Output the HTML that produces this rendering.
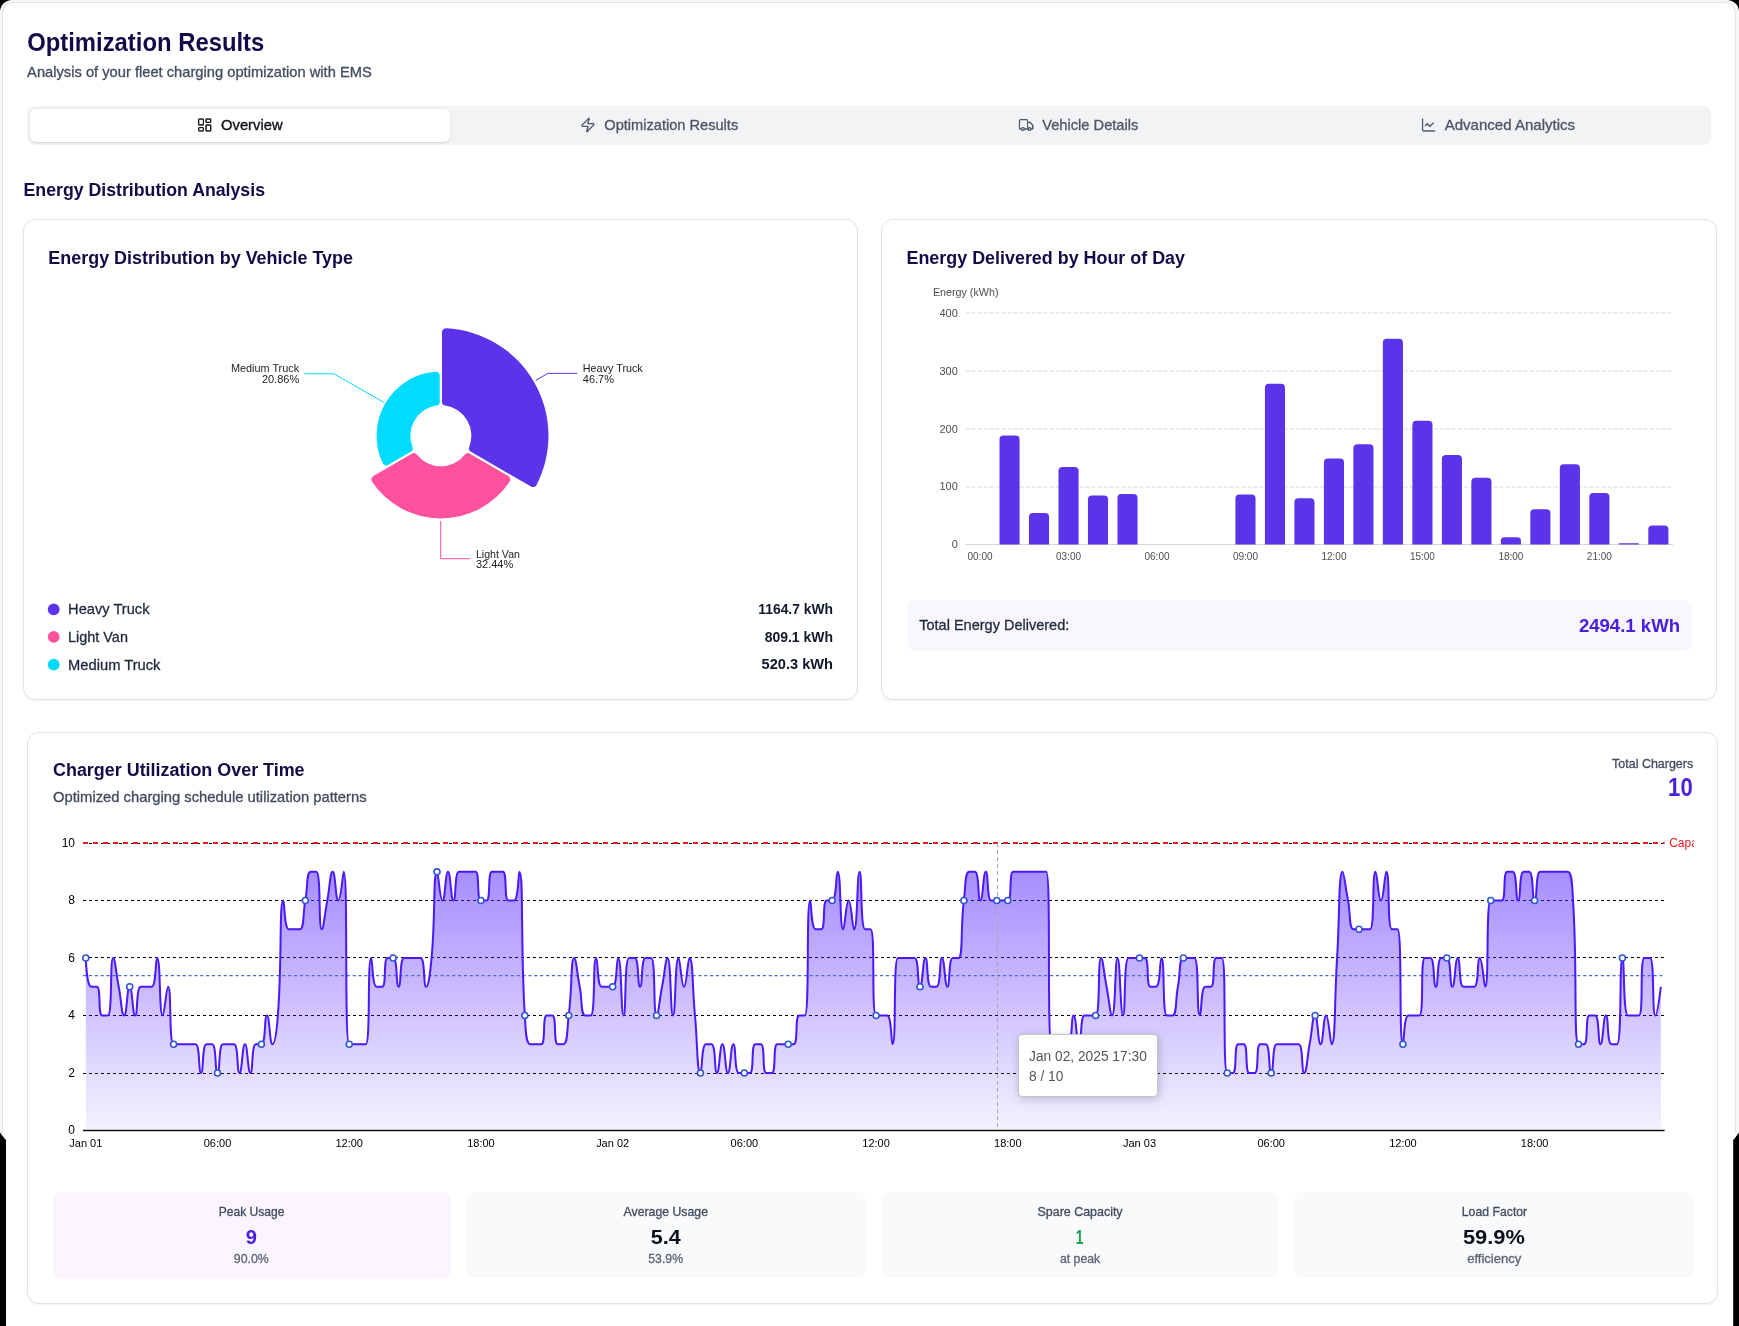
<!DOCTYPE html>
<html><head><meta charset="utf-8"><title>Optimization Results</title>
<style>
*{margin:0;padding:0;box-sizing:border-box}
html,body{width:1739px;height:1326px;overflow:hidden;background:#000;font-family:"Liberation Sans",sans-serif}
.abs{position:absolute}
#ring{left:0;top:0;width:1739px;height:1133px;background:#f6f7f9;border-radius:12px 12px 0 0;overflow:hidden}
#inner{left:2px;top:2px;width:1734px;height:1200px;background:#fff;border:1px solid #e1e3e7;border-radius:11px 11px 0 0}
#bottom{left:0;top:1133px;width:1739px;height:193px;background:#fff}
.card{background:#fff;border:1px solid #e2e2e3;border-radius:12px;box-shadow:0 1px 2px rgba(0,0,0,0.06)}
#tabs{left:26.5px;top:105.6px;width:1684.7px;height:39px;background:#f2f3f5;border-radius:8px}
#tab1{left:29.5px;top:108.6px;width:420.5px;height:33px;background:#fff;border-radius:6px;box-shadow:0 1px 3px rgba(0,0,0,0.10),0 1px 2px -1px rgba(0,0,0,0.10)}
#tot{left:906.7px;top:599.7px;width:785.3px;height:51.2px;background:#f9f6fe;border-radius:8px}
.stat{top:1192px;width:398.1px;height:86px;border-radius:8px;background:#f9fafb}
#tip{left:1018.3px;top:1034.2px;width:139.6px;height:63px;background:#fff;border:1px solid #c4c4c4;border-radius:4px;box-shadow:1px 2px 10px rgba(0,0,0,0.2)}
svg{position:absolute;left:0;top:0;overflow:visible;will-change:transform}
text{font-family:"Liberation Sans",sans-serif}
</style></head><body>
<div id="ring" class="abs"><div id="inner" class="abs"></div></div>
<div id="bottom" class="abs"></div>
<svg width="1739" height="1326" viewBox="0 0 1739 1326"><polygon points="0,1132.6 2.2,1135.4 6,1140.3 6,1326 0,1326" fill="#000"/><polygon points="1739,1132.6 1736.8,1135.4 1733.2,1140.3 1733.2,1326 1739,1326" fill="#000"/></svg>
<div id="tabs" class="abs"></div>
<div id="tab1" class="abs"></div>
<div class="abs card" style="left:22.85px;top:219.1px;width:835.5px;height:480.8px"></div>
<div class="abs card" style="left:881.4px;top:219.1px;width:835.5px;height:480.8px"></div>
<div class="abs card" style="left:27.4px;top:731.7px;width:1690.7px;height:572px"></div>
<div id="tot" class="abs"></div>
<div class="abs stat" style="left:53px;background:#faf5ff"></div>
<div class="abs stat" style="left:467.1px"></div>
<div class="abs stat" style="left:881.2px"></div>
<div class="abs stat" style="left:1295.3px"></div>
<svg width="1739" height="1326" viewBox="0 0 1739 1326">
<path d="M441.950 332.276 A4.000 4.000 0 0 1 446.147 328.280 A107.600 107.600 0 0 1 536.570 484.898 A4.000 4.000 0 0 1 531.011 486.535 L470.950 451.858 A4.000 4.000 0 0 1 469.228 446.928 A30.500 30.500 0 0 0 445.359 405.585 A4.000 4.000 0 0 1 441.950 401.629 Z" fill="#5b34ea"/>
<path d="M508.270 475.945 A4.000 4.000 0 0 1 509.597 481.629 A82.650 82.650 0 0 1 372.103 481.629 A4.000 4.000 0 0 1 373.430 475.945 L411.850 453.763 A4.000 4.000 0 0 1 416.981 454.737 A30.500 30.500 0 0 0 464.719 454.737 A4.000 4.000 0 0 1 469.850 453.763 Z" fill="#ff519d"/>
<path d="M388.266 464.839 A4.000 4.000 0 0 1 382.645 463.075 A64.300 64.300 0 0 1 435.412 371.680 A4.000 4.000 0 0 1 439.750 375.666 L439.750 401.629 A4.000 4.000 0 0 1 436.341 405.585 A30.500 30.500 0 0 0 412.472 446.928 A4.000 4.000 0 0 1 410.750 451.858 Z" fill="#00dbff"/>
<polyline points="535.7,380.4 547.8,373.4 577.2,373.4" fill="none" stroke="#5b34ea" stroke-width="1"/>
<polyline points="383.8,402.3 333.9,373.8 304.4,373.8" fill="none" stroke="#00dbff" stroke-width="1"/>
<polyline points="440.7,521.0 440.7,558.7 470.0,558.7" fill="none" stroke="#ff519d" stroke-width="1"/>
<circle cx="53.7" cy="609.3" r="5.9" fill="#5b34ea"/>
<circle cx="53.7" cy="636.9" r="5.9" fill="#ff519d"/>
<circle cx="53.7" cy="664.6" r="5.9" fill="#00dbff"/>
<line x1="965.7" y1="487.00" x2="1673.1" y2="487.00" stroke="#d9d9d9" stroke-width="1" stroke-dasharray="4 2"/>
<line x1="965.7" y1="429.00" x2="1673.1" y2="429.00" stroke="#d9d9d9" stroke-width="1" stroke-dasharray="4 2"/>
<line x1="965.7" y1="371.00" x2="1673.1" y2="371.00" stroke="#d9d9d9" stroke-width="1" stroke-dasharray="4 2"/>
<line x1="965.7" y1="313.00" x2="1673.1" y2="313.00" stroke="#d9d9d9" stroke-width="1" stroke-dasharray="4 2"/>
<line x1="965.3" y1="544.5" x2="1673.1" y2="544.5" stroke="#d6d6d6" stroke-width="1.2"/>
<path d="M999.49 544.50 V439.45 Q999.49 435.45 1003.49 435.45 H1015.59 Q1019.59 435.45 1019.59 439.45 V544.50 Z" fill="#5b34ea"/>
<path d="M1028.98 544.50 V517.01 Q1028.98 513.01 1032.98 513.01 H1045.08 Q1049.08 513.01 1049.08 517.01 V544.50 Z" fill="#5b34ea"/>
<path d="M1058.47 544.50 V471.06 Q1058.47 467.06 1062.47 467.06 H1074.57 Q1078.57 467.06 1078.57 471.06 V544.50 Z" fill="#5b34ea"/>
<path d="M1087.96 544.50 V499.55 Q1087.96 495.55 1091.96 495.55 H1104.06 Q1108.06 495.55 1108.06 499.55 V544.50 Z" fill="#5b34ea"/>
<path d="M1117.45 544.50 V498.11 Q1117.45 494.11 1121.45 494.11 H1133.55 Q1137.55 494.11 1137.55 498.11 V544.50 Z" fill="#5b34ea"/>
<path d="M1235.42 544.50 V498.57 Q1235.42 494.57 1239.42 494.57 H1251.52 Q1255.52 494.57 1255.52 498.57 V544.50 Z" fill="#5b34ea"/>
<path d="M1264.91 544.50 V387.85 Q1264.91 383.85 1268.91 383.85 H1281.01 Q1285.01 383.85 1285.01 387.85 V544.50 Z" fill="#5b34ea"/>
<path d="M1294.40 544.50 V502.27 Q1294.40 498.27 1298.40 498.27 H1310.50 Q1314.50 498.27 1314.50 502.27 V544.50 Z" fill="#5b34ea"/>
<path d="M1323.90 544.50 V462.40 Q1323.90 458.40 1327.90 458.40 H1340.00 Q1344.00 458.40 1344.00 462.40 V544.50 Z" fill="#5b34ea"/>
<path d="M1353.39 544.50 V448.18 Q1353.39 444.18 1357.39 444.18 H1369.49 Q1373.49 444.18 1373.49 448.18 V544.50 Z" fill="#5b34ea"/>
<path d="M1382.88 544.50 V342.77 Q1382.88 338.77 1386.88 338.77 H1398.98 Q1402.98 338.77 1402.98 342.77 V544.50 Z" fill="#5b34ea"/>
<path d="M1412.37 544.50 V424.83 Q1412.37 420.83 1416.37 420.83 H1428.47 Q1432.47 420.83 1432.47 424.83 V544.50 Z" fill="#5b34ea"/>
<path d="M1441.86 544.50 V459.10 Q1441.86 455.10 1445.86 455.10 H1457.96 Q1461.96 455.10 1461.96 459.10 V544.50 Z" fill="#5b34ea"/>
<path d="M1471.35 544.50 V481.64 Q1471.35 477.64 1475.35 477.64 H1487.45 Q1491.45 477.64 1491.45 481.64 V544.50 Z" fill="#5b34ea"/>
<path d="M1500.85 544.50 V540.86 Q1500.85 537.22 1504.49 537.22 H1517.31 Q1520.95 537.22 1520.95 540.86 V544.50 Z" fill="#5b34ea"/>
<path d="M1530.34 544.50 V513.13 Q1530.34 509.13 1534.34 509.13 H1546.44 Q1550.44 509.13 1550.44 513.13 V544.50 Z" fill="#5b34ea"/>
<path d="M1559.83 544.50 V468.29 Q1559.83 464.29 1563.83 464.29 H1575.93 Q1579.93 464.29 1579.93 468.29 V544.50 Z" fill="#5b34ea"/>
<path d="M1589.32 544.50 V496.90 Q1589.32 492.90 1593.32 492.90 H1605.42 Q1609.42 492.90 1609.42 496.90 V544.50 Z" fill="#5b34ea"/>
<path d="M1618.81 544.50 V543.92 Q1618.81 543.34 1619.39 543.34 H1638.33 Q1638.91 543.34 1638.91 543.92 V544.50 Z" fill="#5b34ea"/>
<path d="M1648.30 544.50 V529.60 Q1648.30 525.60 1652.30 525.60 H1664.40 Q1668.40 525.60 1668.40 529.60 V544.50 Z" fill="#5b34ea"/>
<defs><linearGradient id="ag" x1="0" y1="871.84" x2="0" y2="1130.45" gradientUnits="userSpaceOnUse"><stop offset="0" stop-color="#4b19ff" stop-opacity="0.49"/><stop offset="1" stop-color="#4b19ff" stop-opacity="0.06"/></linearGradient><clipPath id="lcclip"><rect x="0" y="0" width="1694" height="1326"/></clipPath></defs>
<line x1="83" y1="1073.50" x2="1664.6" y2="1073.50" stroke="#000" stroke-width="1" stroke-dasharray="3 3"/>
<line x1="83" y1="1015.50" x2="1664.6" y2="1015.50" stroke="#000" stroke-width="1" stroke-dasharray="3 3"/>
<line x1="83" y1="957.50" x2="1664.6" y2="957.50" stroke="#000" stroke-width="1" stroke-dasharray="3 3"/>
<line x1="83" y1="900.50" x2="1664.6" y2="900.50" stroke="#000" stroke-width="1" stroke-dasharray="3 3"/>
<line x1="83" y1="843.50" x2="1664.6" y2="843.50" stroke="#000" stroke-width="1" stroke-dasharray="3 3"/>
<path d="M85.80 958.04 C85.80 958.04 86.67 986.78 91.29 986.78 C92.15 986.78 95.91 986.78 96.78 986.78 C101.40 986.78 97.64 1015.51 102.26 1015.51 C103.13 1015.51 107.28 1015.51 107.75 1015.51 C112.76 1015.51 109.60 958.04 113.24 958.04 C115.09 958.04 115.98 972.41 118.73 986.78 C121.47 1001.14 121.47 1015.51 124.22 1015.51 C126.96 1015.51 126.96 986.78 129.70 986.78 C132.45 986.78 132.45 1015.51 135.19 1015.51 C137.94 1015.51 136.06 986.78 140.68 986.78 C141.55 986.78 143.42 986.78 146.17 986.78 C148.91 986.78 150.79 986.78 151.66 986.78 C156.28 986.78 155.30 958.04 157.14 958.04 C160.79 958.04 158.99 1015.51 162.63 1015.51 C164.48 1015.51 166.27 986.78 168.12 986.78 C171.76 986.78 168.60 1044.25 173.61 1044.25 C174.08 1044.25 176.35 1044.25 179.10 1044.25 C181.84 1044.25 181.84 1044.25 184.58 1044.25 C187.33 1044.25 187.33 1044.25 190.07 1044.25 C192.82 1044.25 194.69 1044.25 195.56 1044.25 C200.18 1044.25 198.30 1072.98 201.05 1072.98 C203.79 1072.98 201.91 1044.25 206.54 1044.25 C207.40 1044.25 211.16 1044.25 212.02 1044.25 C216.65 1044.25 214.77 1072.98 217.51 1072.98 C220.26 1072.98 218.38 1044.25 223.00 1044.25 C223.87 1044.25 225.74 1044.25 228.49 1044.25 C231.23 1044.25 233.11 1044.25 233.98 1044.25 C238.60 1044.25 236.72 1072.98 239.46 1072.98 C242.21 1072.98 242.21 1044.25 244.95 1044.25 C247.70 1044.25 247.70 1072.98 250.44 1072.98 C253.18 1072.98 251.31 1044.25 255.93 1044.25 C256.79 1044.25 260.55 1044.25 261.42 1044.25 C266.04 1044.25 264.16 1015.51 266.90 1015.51 C269.65 1015.51 269.65 1044.25 272.39 1044.25 C275.14 1044.25 276.77 1030.07 277.88 1015.51 C282.26 958.23 278.99 900.57 283.37 900.57 C284.48 900.57 284.23 929.31 288.86 929.31 C289.72 929.31 291.60 929.31 294.34 929.31 C297.09 929.31 298.97 929.31 299.83 929.31 C304.45 929.31 302.58 914.94 305.32 900.57 C308.06 886.20 306.19 871.84 310.81 871.84 C311.67 871.84 315.82 871.84 316.30 871.84 C321.31 871.84 318.14 929.31 321.78 929.31 C323.63 929.31 324.53 914.94 327.27 900.57 C330.02 886.20 330.02 871.84 332.76 871.84 C335.50 871.84 335.50 900.57 338.25 900.57 C340.99 900.57 342.94 871.84 343.74 871.84 C348.43 871.84 343.91 1044.25 349.22 1044.25 C349.39 1044.25 351.97 1044.25 354.71 1044.25 C357.46 1044.25 357.46 1044.25 360.20 1044.25 C362.94 1044.25 365.36 1044.25 365.69 1044.25 C370.85 1044.25 367.08 958.04 371.18 958.04 C372.56 958.04 372.04 986.78 376.66 986.78 C377.53 986.78 381.29 986.78 382.15 986.78 C386.77 986.78 383.02 958.04 387.64 958.04 C388.51 958.04 392.26 958.04 393.13 958.04 C397.75 958.04 395.87 986.78 398.62 986.78 C401.36 986.78 399.48 958.04 404.10 958.04 C404.97 958.04 406.85 958.04 409.59 958.04 C412.34 958.04 412.34 958.04 415.08 958.04 C417.82 958.04 419.70 958.04 420.57 958.04 C425.19 958.04 423.31 986.78 426.06 986.78 C428.80 986.78 430.16 972.58 431.54 958.04 C435.64 915.11 432.93 871.84 437.03 871.84 C438.42 871.84 439.78 900.57 442.52 900.57 C445.26 900.57 445.26 871.84 448.01 871.84 C450.75 871.84 450.75 900.57 453.50 900.57 C456.24 900.57 454.36 871.84 458.98 871.84 C459.85 871.84 461.73 871.84 464.47 871.84 C467.22 871.84 467.22 871.84 469.96 871.84 C472.70 871.84 474.58 871.84 475.45 871.84 C480.07 871.84 476.31 900.57 480.94 900.57 C481.80 900.57 485.56 900.57 486.42 900.57 C491.05 900.57 487.29 871.84 491.91 871.84 C492.78 871.84 494.66 871.84 497.40 871.84 C500.14 871.84 502.02 871.84 502.89 871.84 C507.51 871.84 503.75 900.57 508.38 900.57 C509.24 900.57 513.00 900.57 513.86 900.57 C518.49 900.57 518.42 871.84 519.35 871.84 C523.91 871.84 520.28 943.88 524.84 1015.51 C525.77 1030.08 525.71 1044.25 530.33 1044.25 C531.19 1044.25 533.07 1044.25 535.82 1044.25 C538.56 1044.25 540.44 1044.25 541.30 1044.25 C545.93 1044.25 542.17 1015.51 546.79 1015.51 C547.66 1015.51 551.41 1015.51 552.28 1015.51 C556.90 1015.51 553.15 1044.25 557.77 1044.25 C558.63 1044.25 562.39 1044.25 563.26 1044.25 C567.88 1044.25 566.90 1030.01 568.74 1015.51 C572.39 986.90 570.59 958.04 574.23 958.04 C576.08 958.04 576.98 972.41 579.72 986.78 C582.46 1001.14 580.59 1015.51 585.21 1015.51 C586.07 1015.51 590.22 1015.51 590.70 1015.51 C595.71 1015.51 592.54 958.04 596.18 958.04 C598.03 958.04 597.05 986.78 601.67 986.78 C602.54 986.78 604.42 986.78 607.16 986.78 C609.90 986.78 611.78 986.78 612.65 986.78 C617.27 986.78 616.29 958.04 618.14 958.04 C621.78 958.04 620.88 1015.51 623.62 1015.51 C626.37 1015.51 624.10 958.04 629.11 958.04 C629.59 958.04 633.73 958.04 634.60 958.04 C639.22 958.04 637.34 986.78 640.09 986.78 C642.83 986.78 640.95 958.04 645.58 958.04 C646.44 958.04 650.59 958.04 651.06 958.04 C656.08 958.04 652.91 1015.51 656.55 1015.51 C658.40 1015.51 659.30 1001.14 662.04 986.78 C664.78 972.41 665.68 958.04 667.53 958.04 C671.17 958.04 670.27 1015.51 673.02 1015.51 C675.76 1015.51 674.86 958.04 678.50 958.04 C680.35 958.04 681.25 986.78 683.99 986.78 C686.74 986.78 687.63 958.04 689.48 958.04 C693.12 958.04 692.22 986.78 694.97 1015.51 C697.71 1044.24 696.81 1072.98 700.46 1072.98 C702.30 1072.98 701.32 1044.25 705.94 1044.25 C706.81 1044.25 710.57 1044.25 711.43 1044.25 C716.05 1044.25 714.18 1072.98 716.92 1072.98 C719.66 1072.98 719.66 1044.25 722.41 1044.25 C725.15 1044.25 725.15 1072.98 727.90 1072.98 C730.64 1072.98 730.64 1044.25 733.38 1044.25 C736.13 1044.25 734.25 1072.98 738.87 1072.98 C739.74 1072.98 741.62 1072.98 744.36 1072.98 C747.10 1072.98 748.98 1072.98 749.85 1072.98 C754.47 1072.98 750.71 1044.25 755.34 1044.25 C756.20 1044.25 759.96 1044.25 760.82 1044.25 C765.45 1044.25 761.69 1072.98 766.31 1072.98 C767.18 1072.98 770.93 1072.98 771.80 1072.98 C776.42 1072.98 772.67 1044.25 777.29 1044.25 C778.15 1044.25 780.03 1044.25 782.78 1044.25 C785.52 1044.25 785.52 1044.25 788.26 1044.25 C791.01 1044.25 792.89 1044.25 793.75 1044.25 C798.37 1044.25 794.62 1015.51 799.24 1015.51 C800.11 1015.51 804.48 1015.51 804.73 1015.51 C809.97 1015.51 805.84 900.57 810.22 900.57 C811.33 900.57 811.08 929.31 815.70 929.31 C816.57 929.31 820.33 929.31 821.19 929.31 C825.81 929.31 822.06 900.57 826.68 900.57 C827.55 900.57 831.30 900.57 832.17 900.57 C836.79 900.57 835.81 871.84 837.66 871.84 C841.30 871.84 839.50 929.31 843.14 929.31 C844.99 929.31 845.89 900.57 848.63 900.57 C851.38 900.57 852.27 929.31 854.12 929.31 C857.76 929.31 856.86 871.84 859.61 871.84 C862.35 871.84 860.08 929.31 865.10 929.31 C865.57 929.31 870.26 929.31 870.58 929.31 C875.74 929.31 870.91 1015.51 876.07 1015.51 C876.40 1015.51 878.82 1015.51 881.56 1015.51 C884.30 1015.51 886.18 1015.51 887.05 1015.51 C891.67 1015.51 891.15 1044.25 892.54 1044.25 C896.64 1044.25 892.86 958.04 898.02 958.04 C898.35 958.04 900.77 958.04 903.51 958.04 C906.26 958.04 906.26 958.04 909.00 958.04 C911.74 958.04 913.62 958.04 914.49 958.04 C919.11 958.04 917.23 986.78 919.98 986.78 C922.72 986.78 922.72 958.04 925.46 958.04 C928.21 958.04 926.33 986.78 930.95 986.78 C931.82 986.78 935.57 986.78 936.44 986.78 C941.06 986.78 939.18 958.04 941.93 958.04 C944.67 958.04 944.67 986.78 947.42 986.78 C950.16 986.78 948.28 958.04 952.90 958.04 C953.77 958.04 957.92 958.04 958.39 958.04 C963.40 958.04 960.24 929.18 963.88 900.57 C965.73 886.07 964.75 871.84 969.37 871.84 C970.23 871.84 973.99 871.84 974.86 871.84 C979.48 871.84 977.60 900.57 980.34 900.57 C983.09 900.57 983.09 871.84 985.83 871.84 C988.58 871.84 986.70 900.57 991.32 900.57 C992.19 900.57 994.06 900.57 996.81 900.57 C999.55 900.57 999.55 900.57 1002.30 900.57 C1005.04 900.57 1006.92 900.57 1007.78 900.57 C1012.41 900.57 1008.65 871.84 1013.27 871.84 C1014.14 871.84 1016.02 871.84 1018.76 871.84 C1021.50 871.84 1021.50 871.84 1024.25 871.84 C1026.99 871.84 1026.99 871.84 1029.74 871.84 C1032.48 871.84 1032.48 871.84 1035.22 871.84 C1037.97 871.84 1037.97 871.84 1040.71 871.84 C1043.46 871.84 1046.03 871.84 1046.20 871.84 C1051.52 871.84 1046.37 1044.25 1051.69 1044.25 C1051.86 1044.25 1054.43 1044.25 1057.18 1044.25 C1059.92 1044.25 1059.92 1044.25 1062.66 1044.25 C1065.41 1044.25 1067.29 1044.25 1068.15 1044.25 C1072.77 1044.25 1070.90 1015.51 1073.64 1015.51 C1076.38 1015.51 1076.38 1044.25 1079.13 1044.25 C1081.87 1044.25 1079.99 1015.51 1084.62 1015.51 C1085.48 1015.51 1087.36 1015.51 1090.10 1015.51 C1092.85 1015.51 1095.12 1015.51 1095.59 1015.51 C1100.60 1015.51 1097.44 958.04 1101.08 958.04 C1102.93 958.04 1103.82 972.41 1106.57 986.78 C1109.31 1001.14 1110.21 1015.51 1112.06 1015.51 C1115.70 1015.51 1114.80 958.04 1117.54 958.04 C1120.29 958.04 1120.29 1015.51 1123.03 1015.51 C1125.78 1015.51 1123.51 958.04 1128.52 958.04 C1129.00 958.04 1131.26 958.04 1134.01 958.04 C1136.75 958.04 1136.75 958.04 1139.50 958.04 C1142.24 958.04 1144.12 958.04 1144.98 958.04 C1149.61 958.04 1145.85 986.78 1150.47 986.78 C1151.34 986.78 1155.09 986.78 1155.96 986.78 C1160.58 986.78 1159.60 958.04 1161.45 958.04 C1165.09 958.04 1161.92 1015.51 1166.94 1015.51 C1167.41 1015.51 1171.56 1015.51 1172.42 1015.51 C1177.05 1015.51 1175.17 1001.14 1177.91 986.78 C1180.66 972.41 1178.78 958.04 1183.40 958.04 C1184.27 958.04 1186.14 958.04 1188.89 958.04 C1191.63 958.04 1193.90 958.04 1194.38 958.04 C1199.39 958.04 1196.22 1015.51 1199.86 1015.51 C1201.71 1015.51 1200.73 986.78 1205.35 986.78 C1206.22 986.78 1209.97 986.78 1210.84 986.78 C1215.46 986.78 1211.71 958.04 1216.33 958.04 C1217.19 958.04 1221.57 958.04 1221.82 958.04 C1227.05 958.04 1222.07 1072.98 1227.30 1072.98 C1227.55 1072.98 1231.93 1072.98 1232.79 1072.98 C1237.41 1072.98 1233.66 1044.25 1238.28 1044.25 C1239.15 1044.25 1242.90 1044.25 1243.77 1044.25 C1248.39 1044.25 1244.63 1072.98 1249.26 1072.98 C1250.12 1072.98 1253.88 1072.98 1254.74 1072.98 C1259.37 1072.98 1255.61 1044.25 1260.23 1044.25 C1261.10 1044.25 1264.85 1044.25 1265.72 1044.25 C1270.34 1044.25 1268.46 1072.98 1271.21 1072.98 C1273.95 1072.98 1272.07 1044.25 1276.70 1044.25 C1277.56 1044.25 1279.44 1044.25 1282.18 1044.25 C1284.93 1044.25 1284.93 1044.25 1287.67 1044.25 C1290.42 1044.25 1290.42 1044.25 1293.16 1044.25 C1295.90 1044.25 1297.78 1044.25 1298.65 1044.25 C1303.27 1044.25 1301.39 1072.98 1304.14 1072.98 C1306.88 1072.98 1306.88 1058.61 1309.62 1044.25 C1312.37 1029.88 1312.37 1015.51 1315.11 1015.51 C1317.86 1015.51 1317.86 1044.25 1320.60 1044.25 C1323.34 1044.25 1323.34 1015.51 1326.09 1015.51 C1328.83 1015.51 1330.19 1044.25 1331.58 1044.25 C1335.68 1044.25 1334.32 1001.14 1337.06 958.04 C1339.81 914.94 1338.45 871.84 1342.55 871.84 C1343.94 871.84 1345.30 886.20 1348.04 900.57 C1350.78 914.94 1348.91 929.31 1353.53 929.31 C1354.39 929.31 1356.27 929.31 1359.02 929.31 C1361.76 929.31 1361.76 929.31 1364.50 929.31 C1367.25 929.31 1369.52 929.31 1369.99 929.31 C1375.00 929.31 1371.84 871.84 1375.48 871.84 C1377.33 871.84 1378.22 900.57 1380.97 900.57 C1383.71 900.57 1384.61 871.84 1386.46 871.84 C1390.10 871.84 1386.93 929.31 1391.94 929.31 C1392.42 929.31 1397.18 929.31 1397.43 929.31 C1402.67 929.31 1398.54 1044.25 1402.92 1044.25 C1404.03 1044.25 1403.79 1015.51 1408.41 1015.51 C1409.27 1015.51 1411.15 1015.51 1413.90 1015.51 C1416.64 1015.51 1418.91 1015.51 1419.38 1015.51 C1424.40 1015.51 1419.86 958.04 1424.87 958.04 C1425.35 958.04 1429.49 958.04 1430.36 958.04 C1434.98 958.04 1433.10 986.78 1435.85 986.78 C1438.59 986.78 1436.71 958.04 1441.34 958.04 C1442.20 958.04 1445.96 958.04 1446.82 958.04 C1451.45 958.04 1449.57 986.78 1452.31 986.78 C1455.06 986.78 1455.06 958.04 1457.80 958.04 C1460.54 958.04 1458.67 986.78 1463.29 986.78 C1464.15 986.78 1466.03 986.78 1468.78 986.78 C1471.52 986.78 1473.40 986.78 1474.26 986.78 C1478.89 986.78 1477.01 958.04 1479.75 958.04 C1482.50 958.04 1483.85 986.78 1485.24 986.78 C1489.34 986.78 1485.57 900.57 1490.73 900.57 C1491.06 900.57 1493.47 900.57 1496.22 900.57 C1498.96 900.57 1500.84 900.57 1501.70 900.57 C1506.33 900.57 1502.57 871.84 1507.19 871.84 C1508.06 871.84 1511.81 871.84 1512.68 871.84 C1517.30 871.84 1515.42 900.57 1518.17 900.57 C1520.91 900.57 1519.03 871.84 1523.66 871.84 C1524.52 871.84 1528.28 871.84 1529.14 871.84 C1533.77 871.84 1531.89 900.57 1534.63 900.57 C1537.38 900.57 1535.50 871.84 1540.12 871.84 C1540.99 871.84 1542.86 871.84 1545.61 871.84 C1548.35 871.84 1548.35 871.84 1551.10 871.84 C1553.84 871.84 1553.84 871.84 1556.58 871.84 C1559.33 871.84 1559.33 871.84 1562.07 871.84 C1564.82 871.84 1566.69 871.84 1567.56 871.84 C1572.18 871.84 1572.12 886.00 1573.05 900.57 C1577.61 972.20 1573.25 1044.25 1578.54 1044.25 C1578.74 1044.25 1583.16 1044.25 1584.02 1044.25 C1588.65 1044.25 1584.89 1015.51 1589.51 1015.51 C1590.38 1015.51 1594.13 1015.51 1595.00 1015.51 C1599.62 1015.51 1597.74 1044.25 1600.49 1044.25 C1603.23 1044.25 1603.23 1015.51 1605.98 1015.51 C1608.72 1015.51 1606.84 1044.25 1611.46 1044.25 C1612.33 1044.25 1616.62 1044.25 1616.95 1044.25 C1622.11 1044.25 1619.15 958.04 1622.44 958.04 C1624.64 958.04 1622.92 1015.51 1627.93 1015.51 C1628.40 1015.51 1630.67 1015.51 1633.42 1015.51 C1636.16 1015.51 1638.43 1015.51 1638.90 1015.51 C1643.92 1015.51 1639.38 958.04 1644.39 958.04 C1644.87 958.04 1649.40 958.04 1649.88 958.04 C1654.89 958.04 1651.73 1015.51 1655.37 1015.51 C1657.21 1015.51 1660.86 986.78 1660.86 986.78 L1660.86 1128.95 L85.80 1128.95 Z" fill="url(#ag)"/>
<line x1="83" y1="1130.45" x2="1664.6" y2="1130.45" stroke="#111" stroke-width="1.4"/>
<line x1="83.1" y1="975.71" x2="1664.6" y2="975.71" stroke="#4468d8" stroke-width="1.2" stroke-dasharray="3 2.86"/>
<line x1="83" y1="843.10" x2="1664.6" y2="843.10" stroke="#e81919" stroke-width="2" stroke-dasharray="5 5"/>
<g clip-path="url(#lcclip)"><text x="1669.20" y="847.30" style="font-size:12.00px;fill:#e81919" textLength="46.69" lengthAdjust="spacingAndGlyphs">Capacity</text></g>
<line x1="997.5" y1="843" x2="997.5" y2="1130" stroke="#a8a8a8" stroke-width="1" stroke-dasharray="4 3"/>
<path d="M85.80 958.04 C85.80 958.04 86.67 986.78 91.29 986.78 C92.15 986.78 95.91 986.78 96.78 986.78 C101.40 986.78 97.64 1015.51 102.26 1015.51 C103.13 1015.51 107.28 1015.51 107.75 1015.51 C112.76 1015.51 109.60 958.04 113.24 958.04 C115.09 958.04 115.98 972.41 118.73 986.78 C121.47 1001.14 121.47 1015.51 124.22 1015.51 C126.96 1015.51 126.96 986.78 129.70 986.78 C132.45 986.78 132.45 1015.51 135.19 1015.51 C137.94 1015.51 136.06 986.78 140.68 986.78 C141.55 986.78 143.42 986.78 146.17 986.78 C148.91 986.78 150.79 986.78 151.66 986.78 C156.28 986.78 155.30 958.04 157.14 958.04 C160.79 958.04 158.99 1015.51 162.63 1015.51 C164.48 1015.51 166.27 986.78 168.12 986.78 C171.76 986.78 168.60 1044.25 173.61 1044.25 C174.08 1044.25 176.35 1044.25 179.10 1044.25 C181.84 1044.25 181.84 1044.25 184.58 1044.25 C187.33 1044.25 187.33 1044.25 190.07 1044.25 C192.82 1044.25 194.69 1044.25 195.56 1044.25 C200.18 1044.25 198.30 1072.98 201.05 1072.98 C203.79 1072.98 201.91 1044.25 206.54 1044.25 C207.40 1044.25 211.16 1044.25 212.02 1044.25 C216.65 1044.25 214.77 1072.98 217.51 1072.98 C220.26 1072.98 218.38 1044.25 223.00 1044.25 C223.87 1044.25 225.74 1044.25 228.49 1044.25 C231.23 1044.25 233.11 1044.25 233.98 1044.25 C238.60 1044.25 236.72 1072.98 239.46 1072.98 C242.21 1072.98 242.21 1044.25 244.95 1044.25 C247.70 1044.25 247.70 1072.98 250.44 1072.98 C253.18 1072.98 251.31 1044.25 255.93 1044.25 C256.79 1044.25 260.55 1044.25 261.42 1044.25 C266.04 1044.25 264.16 1015.51 266.90 1015.51 C269.65 1015.51 269.65 1044.25 272.39 1044.25 C275.14 1044.25 276.77 1030.07 277.88 1015.51 C282.26 958.23 278.99 900.57 283.37 900.57 C284.48 900.57 284.23 929.31 288.86 929.31 C289.72 929.31 291.60 929.31 294.34 929.31 C297.09 929.31 298.97 929.31 299.83 929.31 C304.45 929.31 302.58 914.94 305.32 900.57 C308.06 886.20 306.19 871.84 310.81 871.84 C311.67 871.84 315.82 871.84 316.30 871.84 C321.31 871.84 318.14 929.31 321.78 929.31 C323.63 929.31 324.53 914.94 327.27 900.57 C330.02 886.20 330.02 871.84 332.76 871.84 C335.50 871.84 335.50 900.57 338.25 900.57 C340.99 900.57 342.94 871.84 343.74 871.84 C348.43 871.84 343.91 1044.25 349.22 1044.25 C349.39 1044.25 351.97 1044.25 354.71 1044.25 C357.46 1044.25 357.46 1044.25 360.20 1044.25 C362.94 1044.25 365.36 1044.25 365.69 1044.25 C370.85 1044.25 367.08 958.04 371.18 958.04 C372.56 958.04 372.04 986.78 376.66 986.78 C377.53 986.78 381.29 986.78 382.15 986.78 C386.77 986.78 383.02 958.04 387.64 958.04 C388.51 958.04 392.26 958.04 393.13 958.04 C397.75 958.04 395.87 986.78 398.62 986.78 C401.36 986.78 399.48 958.04 404.10 958.04 C404.97 958.04 406.85 958.04 409.59 958.04 C412.34 958.04 412.34 958.04 415.08 958.04 C417.82 958.04 419.70 958.04 420.57 958.04 C425.19 958.04 423.31 986.78 426.06 986.78 C428.80 986.78 430.16 972.58 431.54 958.04 C435.64 915.11 432.93 871.84 437.03 871.84 C438.42 871.84 439.78 900.57 442.52 900.57 C445.26 900.57 445.26 871.84 448.01 871.84 C450.75 871.84 450.75 900.57 453.50 900.57 C456.24 900.57 454.36 871.84 458.98 871.84 C459.85 871.84 461.73 871.84 464.47 871.84 C467.22 871.84 467.22 871.84 469.96 871.84 C472.70 871.84 474.58 871.84 475.45 871.84 C480.07 871.84 476.31 900.57 480.94 900.57 C481.80 900.57 485.56 900.57 486.42 900.57 C491.05 900.57 487.29 871.84 491.91 871.84 C492.78 871.84 494.66 871.84 497.40 871.84 C500.14 871.84 502.02 871.84 502.89 871.84 C507.51 871.84 503.75 900.57 508.38 900.57 C509.24 900.57 513.00 900.57 513.86 900.57 C518.49 900.57 518.42 871.84 519.35 871.84 C523.91 871.84 520.28 943.88 524.84 1015.51 C525.77 1030.08 525.71 1044.25 530.33 1044.25 C531.19 1044.25 533.07 1044.25 535.82 1044.25 C538.56 1044.25 540.44 1044.25 541.30 1044.25 C545.93 1044.25 542.17 1015.51 546.79 1015.51 C547.66 1015.51 551.41 1015.51 552.28 1015.51 C556.90 1015.51 553.15 1044.25 557.77 1044.25 C558.63 1044.25 562.39 1044.25 563.26 1044.25 C567.88 1044.25 566.90 1030.01 568.74 1015.51 C572.39 986.90 570.59 958.04 574.23 958.04 C576.08 958.04 576.98 972.41 579.72 986.78 C582.46 1001.14 580.59 1015.51 585.21 1015.51 C586.07 1015.51 590.22 1015.51 590.70 1015.51 C595.71 1015.51 592.54 958.04 596.18 958.04 C598.03 958.04 597.05 986.78 601.67 986.78 C602.54 986.78 604.42 986.78 607.16 986.78 C609.90 986.78 611.78 986.78 612.65 986.78 C617.27 986.78 616.29 958.04 618.14 958.04 C621.78 958.04 620.88 1015.51 623.62 1015.51 C626.37 1015.51 624.10 958.04 629.11 958.04 C629.59 958.04 633.73 958.04 634.60 958.04 C639.22 958.04 637.34 986.78 640.09 986.78 C642.83 986.78 640.95 958.04 645.58 958.04 C646.44 958.04 650.59 958.04 651.06 958.04 C656.08 958.04 652.91 1015.51 656.55 1015.51 C658.40 1015.51 659.30 1001.14 662.04 986.78 C664.78 972.41 665.68 958.04 667.53 958.04 C671.17 958.04 670.27 1015.51 673.02 1015.51 C675.76 1015.51 674.86 958.04 678.50 958.04 C680.35 958.04 681.25 986.78 683.99 986.78 C686.74 986.78 687.63 958.04 689.48 958.04 C693.12 958.04 692.22 986.78 694.97 1015.51 C697.71 1044.24 696.81 1072.98 700.46 1072.98 C702.30 1072.98 701.32 1044.25 705.94 1044.25 C706.81 1044.25 710.57 1044.25 711.43 1044.25 C716.05 1044.25 714.18 1072.98 716.92 1072.98 C719.66 1072.98 719.66 1044.25 722.41 1044.25 C725.15 1044.25 725.15 1072.98 727.90 1072.98 C730.64 1072.98 730.64 1044.25 733.38 1044.25 C736.13 1044.25 734.25 1072.98 738.87 1072.98 C739.74 1072.98 741.62 1072.98 744.36 1072.98 C747.10 1072.98 748.98 1072.98 749.85 1072.98 C754.47 1072.98 750.71 1044.25 755.34 1044.25 C756.20 1044.25 759.96 1044.25 760.82 1044.25 C765.45 1044.25 761.69 1072.98 766.31 1072.98 C767.18 1072.98 770.93 1072.98 771.80 1072.98 C776.42 1072.98 772.67 1044.25 777.29 1044.25 C778.15 1044.25 780.03 1044.25 782.78 1044.25 C785.52 1044.25 785.52 1044.25 788.26 1044.25 C791.01 1044.25 792.89 1044.25 793.75 1044.25 C798.37 1044.25 794.62 1015.51 799.24 1015.51 C800.11 1015.51 804.48 1015.51 804.73 1015.51 C809.97 1015.51 805.84 900.57 810.22 900.57 C811.33 900.57 811.08 929.31 815.70 929.31 C816.57 929.31 820.33 929.31 821.19 929.31 C825.81 929.31 822.06 900.57 826.68 900.57 C827.55 900.57 831.30 900.57 832.17 900.57 C836.79 900.57 835.81 871.84 837.66 871.84 C841.30 871.84 839.50 929.31 843.14 929.31 C844.99 929.31 845.89 900.57 848.63 900.57 C851.38 900.57 852.27 929.31 854.12 929.31 C857.76 929.31 856.86 871.84 859.61 871.84 C862.35 871.84 860.08 929.31 865.10 929.31 C865.57 929.31 870.26 929.31 870.58 929.31 C875.74 929.31 870.91 1015.51 876.07 1015.51 C876.40 1015.51 878.82 1015.51 881.56 1015.51 C884.30 1015.51 886.18 1015.51 887.05 1015.51 C891.67 1015.51 891.15 1044.25 892.54 1044.25 C896.64 1044.25 892.86 958.04 898.02 958.04 C898.35 958.04 900.77 958.04 903.51 958.04 C906.26 958.04 906.26 958.04 909.00 958.04 C911.74 958.04 913.62 958.04 914.49 958.04 C919.11 958.04 917.23 986.78 919.98 986.78 C922.72 986.78 922.72 958.04 925.46 958.04 C928.21 958.04 926.33 986.78 930.95 986.78 C931.82 986.78 935.57 986.78 936.44 986.78 C941.06 986.78 939.18 958.04 941.93 958.04 C944.67 958.04 944.67 986.78 947.42 986.78 C950.16 986.78 948.28 958.04 952.90 958.04 C953.77 958.04 957.92 958.04 958.39 958.04 C963.40 958.04 960.24 929.18 963.88 900.57 C965.73 886.07 964.75 871.84 969.37 871.84 C970.23 871.84 973.99 871.84 974.86 871.84 C979.48 871.84 977.60 900.57 980.34 900.57 C983.09 900.57 983.09 871.84 985.83 871.84 C988.58 871.84 986.70 900.57 991.32 900.57 C992.19 900.57 994.06 900.57 996.81 900.57 C999.55 900.57 999.55 900.57 1002.30 900.57 C1005.04 900.57 1006.92 900.57 1007.78 900.57 C1012.41 900.57 1008.65 871.84 1013.27 871.84 C1014.14 871.84 1016.02 871.84 1018.76 871.84 C1021.50 871.84 1021.50 871.84 1024.25 871.84 C1026.99 871.84 1026.99 871.84 1029.74 871.84 C1032.48 871.84 1032.48 871.84 1035.22 871.84 C1037.97 871.84 1037.97 871.84 1040.71 871.84 C1043.46 871.84 1046.03 871.84 1046.20 871.84 C1051.52 871.84 1046.37 1044.25 1051.69 1044.25 C1051.86 1044.25 1054.43 1044.25 1057.18 1044.25 C1059.92 1044.25 1059.92 1044.25 1062.66 1044.25 C1065.41 1044.25 1067.29 1044.25 1068.15 1044.25 C1072.77 1044.25 1070.90 1015.51 1073.64 1015.51 C1076.38 1015.51 1076.38 1044.25 1079.13 1044.25 C1081.87 1044.25 1079.99 1015.51 1084.62 1015.51 C1085.48 1015.51 1087.36 1015.51 1090.10 1015.51 C1092.85 1015.51 1095.12 1015.51 1095.59 1015.51 C1100.60 1015.51 1097.44 958.04 1101.08 958.04 C1102.93 958.04 1103.82 972.41 1106.57 986.78 C1109.31 1001.14 1110.21 1015.51 1112.06 1015.51 C1115.70 1015.51 1114.80 958.04 1117.54 958.04 C1120.29 958.04 1120.29 1015.51 1123.03 1015.51 C1125.78 1015.51 1123.51 958.04 1128.52 958.04 C1129.00 958.04 1131.26 958.04 1134.01 958.04 C1136.75 958.04 1136.75 958.04 1139.50 958.04 C1142.24 958.04 1144.12 958.04 1144.98 958.04 C1149.61 958.04 1145.85 986.78 1150.47 986.78 C1151.34 986.78 1155.09 986.78 1155.96 986.78 C1160.58 986.78 1159.60 958.04 1161.45 958.04 C1165.09 958.04 1161.92 1015.51 1166.94 1015.51 C1167.41 1015.51 1171.56 1015.51 1172.42 1015.51 C1177.05 1015.51 1175.17 1001.14 1177.91 986.78 C1180.66 972.41 1178.78 958.04 1183.40 958.04 C1184.27 958.04 1186.14 958.04 1188.89 958.04 C1191.63 958.04 1193.90 958.04 1194.38 958.04 C1199.39 958.04 1196.22 1015.51 1199.86 1015.51 C1201.71 1015.51 1200.73 986.78 1205.35 986.78 C1206.22 986.78 1209.97 986.78 1210.84 986.78 C1215.46 986.78 1211.71 958.04 1216.33 958.04 C1217.19 958.04 1221.57 958.04 1221.82 958.04 C1227.05 958.04 1222.07 1072.98 1227.30 1072.98 C1227.55 1072.98 1231.93 1072.98 1232.79 1072.98 C1237.41 1072.98 1233.66 1044.25 1238.28 1044.25 C1239.15 1044.25 1242.90 1044.25 1243.77 1044.25 C1248.39 1044.25 1244.63 1072.98 1249.26 1072.98 C1250.12 1072.98 1253.88 1072.98 1254.74 1072.98 C1259.37 1072.98 1255.61 1044.25 1260.23 1044.25 C1261.10 1044.25 1264.85 1044.25 1265.72 1044.25 C1270.34 1044.25 1268.46 1072.98 1271.21 1072.98 C1273.95 1072.98 1272.07 1044.25 1276.70 1044.25 C1277.56 1044.25 1279.44 1044.25 1282.18 1044.25 C1284.93 1044.25 1284.93 1044.25 1287.67 1044.25 C1290.42 1044.25 1290.42 1044.25 1293.16 1044.25 C1295.90 1044.25 1297.78 1044.25 1298.65 1044.25 C1303.27 1044.25 1301.39 1072.98 1304.14 1072.98 C1306.88 1072.98 1306.88 1058.61 1309.62 1044.25 C1312.37 1029.88 1312.37 1015.51 1315.11 1015.51 C1317.86 1015.51 1317.86 1044.25 1320.60 1044.25 C1323.34 1044.25 1323.34 1015.51 1326.09 1015.51 C1328.83 1015.51 1330.19 1044.25 1331.58 1044.25 C1335.68 1044.25 1334.32 1001.14 1337.06 958.04 C1339.81 914.94 1338.45 871.84 1342.55 871.84 C1343.94 871.84 1345.30 886.20 1348.04 900.57 C1350.78 914.94 1348.91 929.31 1353.53 929.31 C1354.39 929.31 1356.27 929.31 1359.02 929.31 C1361.76 929.31 1361.76 929.31 1364.50 929.31 C1367.25 929.31 1369.52 929.31 1369.99 929.31 C1375.00 929.31 1371.84 871.84 1375.48 871.84 C1377.33 871.84 1378.22 900.57 1380.97 900.57 C1383.71 900.57 1384.61 871.84 1386.46 871.84 C1390.10 871.84 1386.93 929.31 1391.94 929.31 C1392.42 929.31 1397.18 929.31 1397.43 929.31 C1402.67 929.31 1398.54 1044.25 1402.92 1044.25 C1404.03 1044.25 1403.79 1015.51 1408.41 1015.51 C1409.27 1015.51 1411.15 1015.51 1413.90 1015.51 C1416.64 1015.51 1418.91 1015.51 1419.38 1015.51 C1424.40 1015.51 1419.86 958.04 1424.87 958.04 C1425.35 958.04 1429.49 958.04 1430.36 958.04 C1434.98 958.04 1433.10 986.78 1435.85 986.78 C1438.59 986.78 1436.71 958.04 1441.34 958.04 C1442.20 958.04 1445.96 958.04 1446.82 958.04 C1451.45 958.04 1449.57 986.78 1452.31 986.78 C1455.06 986.78 1455.06 958.04 1457.80 958.04 C1460.54 958.04 1458.67 986.78 1463.29 986.78 C1464.15 986.78 1466.03 986.78 1468.78 986.78 C1471.52 986.78 1473.40 986.78 1474.26 986.78 C1478.89 986.78 1477.01 958.04 1479.75 958.04 C1482.50 958.04 1483.85 986.78 1485.24 986.78 C1489.34 986.78 1485.57 900.57 1490.73 900.57 C1491.06 900.57 1493.47 900.57 1496.22 900.57 C1498.96 900.57 1500.84 900.57 1501.70 900.57 C1506.33 900.57 1502.57 871.84 1507.19 871.84 C1508.06 871.84 1511.81 871.84 1512.68 871.84 C1517.30 871.84 1515.42 900.57 1518.17 900.57 C1520.91 900.57 1519.03 871.84 1523.66 871.84 C1524.52 871.84 1528.28 871.84 1529.14 871.84 C1533.77 871.84 1531.89 900.57 1534.63 900.57 C1537.38 900.57 1535.50 871.84 1540.12 871.84 C1540.99 871.84 1542.86 871.84 1545.61 871.84 C1548.35 871.84 1548.35 871.84 1551.10 871.84 C1553.84 871.84 1553.84 871.84 1556.58 871.84 C1559.33 871.84 1559.33 871.84 1562.07 871.84 C1564.82 871.84 1566.69 871.84 1567.56 871.84 C1572.18 871.84 1572.12 886.00 1573.05 900.57 C1577.61 972.20 1573.25 1044.25 1578.54 1044.25 C1578.74 1044.25 1583.16 1044.25 1584.02 1044.25 C1588.65 1044.25 1584.89 1015.51 1589.51 1015.51 C1590.38 1015.51 1594.13 1015.51 1595.00 1015.51 C1599.62 1015.51 1597.74 1044.25 1600.49 1044.25 C1603.23 1044.25 1603.23 1015.51 1605.98 1015.51 C1608.72 1015.51 1606.84 1044.25 1611.46 1044.25 C1612.33 1044.25 1616.62 1044.25 1616.95 1044.25 C1622.11 1044.25 1619.15 958.04 1622.44 958.04 C1624.64 958.04 1622.92 1015.51 1627.93 1015.51 C1628.40 1015.51 1630.67 1015.51 1633.42 1015.51 C1636.16 1015.51 1638.43 1015.51 1638.90 1015.51 C1643.92 1015.51 1639.38 958.04 1644.39 958.04 C1644.87 958.04 1649.40 958.04 1649.88 958.04 C1654.89 958.04 1651.73 1015.51 1655.37 1015.51 C1657.21 1015.51 1660.86 986.78 1660.86 986.78" fill="none" stroke="#4b19ff" stroke-width="2" stroke-linejoin="round"/>
<circle cx="85.80" cy="958.04" r="3" fill="#fff" stroke="#2f55d4" stroke-width="1.6"/>
<circle cx="129.70" cy="986.78" r="3" fill="#fff" stroke="#2f55d4" stroke-width="1.6"/>
<circle cx="173.61" cy="1044.25" r="3" fill="#fff" stroke="#2f55d4" stroke-width="1.6"/>
<circle cx="217.51" cy="1072.98" r="3" fill="#fff" stroke="#2f55d4" stroke-width="1.6"/>
<circle cx="261.42" cy="1044.25" r="3" fill="#fff" stroke="#2f55d4" stroke-width="1.6"/>
<circle cx="305.32" cy="900.57" r="3" fill="#fff" stroke="#2f55d4" stroke-width="1.6"/>
<circle cx="349.22" cy="1044.25" r="3" fill="#fff" stroke="#2f55d4" stroke-width="1.6"/>
<circle cx="393.13" cy="958.04" r="3" fill="#fff" stroke="#2f55d4" stroke-width="1.6"/>
<circle cx="437.03" cy="871.84" r="3" fill="#fff" stroke="#2f55d4" stroke-width="1.6"/>
<circle cx="480.94" cy="900.57" r="3" fill="#fff" stroke="#2f55d4" stroke-width="1.6"/>
<circle cx="524.84" cy="1015.51" r="3" fill="#fff" stroke="#2f55d4" stroke-width="1.6"/>
<circle cx="568.74" cy="1015.51" r="3" fill="#fff" stroke="#2f55d4" stroke-width="1.6"/>
<circle cx="612.65" cy="986.78" r="3" fill="#fff" stroke="#2f55d4" stroke-width="1.6"/>
<circle cx="656.55" cy="1015.51" r="3" fill="#fff" stroke="#2f55d4" stroke-width="1.6"/>
<circle cx="700.46" cy="1072.98" r="3" fill="#fff" stroke="#2f55d4" stroke-width="1.6"/>
<circle cx="744.36" cy="1072.98" r="3" fill="#fff" stroke="#2f55d4" stroke-width="1.6"/>
<circle cx="788.26" cy="1044.25" r="3" fill="#fff" stroke="#2f55d4" stroke-width="1.6"/>
<circle cx="832.17" cy="900.57" r="3" fill="#fff" stroke="#2f55d4" stroke-width="1.6"/>
<circle cx="876.07" cy="1015.51" r="3" fill="#fff" stroke="#2f55d4" stroke-width="1.6"/>
<circle cx="919.98" cy="986.78" r="3" fill="#fff" stroke="#2f55d4" stroke-width="1.6"/>
<circle cx="963.88" cy="900.57" r="3" fill="#fff" stroke="#2f55d4" stroke-width="1.6"/>
<circle cx="1007.78" cy="900.57" r="3" fill="#fff" stroke="#2f55d4" stroke-width="1.6"/>
<circle cx="1051.69" cy="1044.25" r="3" fill="#fff" stroke="#2f55d4" stroke-width="1.6"/>
<circle cx="1095.59" cy="1015.51" r="3" fill="#fff" stroke="#2f55d4" stroke-width="1.6"/>
<circle cx="1139.50" cy="958.04" r="3" fill="#fff" stroke="#2f55d4" stroke-width="1.6"/>
<circle cx="1183.40" cy="958.04" r="3" fill="#fff" stroke="#2f55d4" stroke-width="1.6"/>
<circle cx="1227.30" cy="1072.98" r="3" fill="#fff" stroke="#2f55d4" stroke-width="1.6"/>
<circle cx="1271.21" cy="1072.98" r="3" fill="#fff" stroke="#2f55d4" stroke-width="1.6"/>
<circle cx="1315.11" cy="1015.51" r="3" fill="#fff" stroke="#2f55d4" stroke-width="1.6"/>
<circle cx="1359.02" cy="929.31" r="3" fill="#fff" stroke="#2f55d4" stroke-width="1.6"/>
<circle cx="1402.92" cy="1044.25" r="3" fill="#fff" stroke="#2f55d4" stroke-width="1.6"/>
<circle cx="1446.82" cy="958.04" r="3" fill="#fff" stroke="#2f55d4" stroke-width="1.6"/>
<circle cx="1490.73" cy="900.57" r="3" fill="#fff" stroke="#2f55d4" stroke-width="1.6"/>
<circle cx="1534.63" cy="900.57" r="3" fill="#fff" stroke="#2f55d4" stroke-width="1.6"/>
<circle cx="1578.54" cy="1044.25" r="3" fill="#fff" stroke="#2f55d4" stroke-width="1.6"/>
<circle cx="1622.44" cy="958.04" r="3" fill="#fff" stroke="#2f55d4" stroke-width="1.6"/>
<circle cx="996.81" cy="900.57" r="3" fill="#fff" stroke="#2f55d4" stroke-width="1.6"/>
<svg x="196.70" y="117.00" width="16" height="16" viewBox="0 0 24 24" fill="none" stroke="#0f1117" stroke-width="2" stroke-linecap="round" stroke-linejoin="round"><rect width="7" height="9" x="3" y="3" rx="1"/><rect width="7" height="5" x="14" y="3" rx="1"/><rect width="7" height="9" x="14" y="12" rx="1"/><rect width="7" height="5" x="3" y="16" rx="1"/></svg>
<svg x="579.90" y="117.00" width="16" height="16" viewBox="0 0 24 24" fill="none" stroke="#4b5568" stroke-width="2" stroke-linecap="round" stroke-linejoin="round"><path d="M4 14a1 1 0 0 1-.78-1.63l9.9-10.2a.5.5 0 0 1 .86.46l-1.92 6.02A1 1 0 0 0 13 10h7a1 1 0 0 1 .78 1.63l-9.9 10.2a.5.5 0 0 1-.86-.46l1.92-6.02A1 1 0 0 0 11 14z"/></svg>
<svg x="1018.20" y="117.00" width="16" height="16" viewBox="0 0 24 24" fill="none" stroke="#4b5568" stroke-width="2" stroke-linecap="round" stroke-linejoin="round"><path d="M14 18V6a2 2 0 0 0-2-2H4a2 2 0 0 0-2 2v11a1 1 0 0 0 1 1h2"/><path d="M15 18H9"/><path d="M19 18h2a1 1 0 0 0 1-1v-3.65a1 1 0 0 0-.22-.624l-3.48-4.35A1 1 0 0 0 17.52 8H14"/><circle cx="17" cy="18" r="2"/><circle cx="7" cy="18" r="2"/></svg>
<svg x="1420.60" y="117.00" width="16" height="16" viewBox="0 0 24 24" fill="none" stroke="#4b5568" stroke-width="2" stroke-linecap="round" stroke-linejoin="round"><path d="M3 3v16a2 2 0 0 0 2 2h16"/><path d="m19 9-5 5-4-4-3 3"/></svg>
<text x="27.20" y="51.20" style="font-size:25.20px;font-weight:700;fill:#120b48" textLength="237.11" lengthAdjust="spacingAndGlyphs">Optimization Results</text>
<text x="27.10" y="76.80" style="font-size:14.60px;fill:#414b5f" textLength="344.70" lengthAdjust="spacingAndGlyphs" stroke="#414b5f" stroke-width="0.3">Analysis of your fleet charging optimization with EMS</text>
<text x="221.05" y="129.80" style="font-size:14.60px;fill:#0f1117" textLength="61.51" lengthAdjust="spacingAndGlyphs" stroke="#0f1117" stroke-width="0.35">Overview</text>
<text x="604.30" y="129.60" style="font-size:14.60px;fill:#4b5568" textLength="133.90" lengthAdjust="spacingAndGlyphs" stroke="#4b5568" stroke-width="0.3">Optimization Results</text>
<text x="1042.20" y="129.60" style="font-size:14.60px;fill:#4b5568" textLength="96.20" lengthAdjust="spacingAndGlyphs" stroke="#4b5568" stroke-width="0.3">Vehicle Details</text>
<text x="1444.70" y="129.60" style="font-size:14.60px;fill:#4b5568" textLength="130.40" lengthAdjust="spacingAndGlyphs" stroke="#4b5568" stroke-width="0.3">Advanced Analytics</text>
<text x="23.50" y="195.50" style="font-size:18.80px;font-weight:700;fill:#120b48" textLength="241.51" lengthAdjust="spacingAndGlyphs">Energy Distribution Analysis</text>
<text x="48.30" y="264.00" style="font-size:18.80px;font-weight:700;fill:#120b48" textLength="304.71" lengthAdjust="spacingAndGlyphs">Energy Distribution by Vehicle Type</text>
<text x="906.50" y="264.00" style="font-size:18.80px;font-weight:700;fill:#120b48" textLength="278.50" lengthAdjust="spacingAndGlyphs">Energy Delivered by Hour of Day</text>
<text x="230.90" y="372.40" style="font-size:11.00px;fill:#222" textLength="68.28" lengthAdjust="spacingAndGlyphs">Medium Truck</text>
<text x="261.89" y="383.20" style="font-size:11.00px;fill:#222" textLength="37.31" lengthAdjust="spacingAndGlyphs">20.86%</text>
<text x="582.80" y="372.10" style="font-size:11.00px;fill:#222" textLength="59.98" lengthAdjust="spacingAndGlyphs">Heavy Truck</text>
<text x="582.80" y="382.90" style="font-size:11.00px;fill:#222" textLength="31.19" lengthAdjust="spacingAndGlyphs">46.7%</text>
<text x="475.90" y="557.50" style="font-size:11.00px;fill:#222" textLength="44.10" lengthAdjust="spacingAndGlyphs">Light Van</text>
<text x="475.90" y="568.20" style="font-size:11.00px;fill:#222" textLength="37.31" lengthAdjust="spacingAndGlyphs">32.44%</text>
<text x="68.10" y="614.10" style="font-size:14.60px;fill:#1e293b" textLength="81.37" lengthAdjust="spacingAndGlyphs" stroke="#1e293b" stroke-width="0.3">Heavy Truck</text>
<text x="68.10" y="641.90" style="font-size:14.60px;fill:#1e293b" textLength="59.81" lengthAdjust="spacingAndGlyphs" stroke="#1e293b" stroke-width="0.3">Light Van</text>
<text x="68.10" y="669.50" style="font-size:14.60px;fill:#1e293b" textLength="92.38" lengthAdjust="spacingAndGlyphs" stroke="#1e293b" stroke-width="0.3">Medium Truck</text>
<text x="758.30" y="614.10" style="font-size:14.60px;font-weight:700;fill:#0f172a" textLength="74.70" lengthAdjust="spacingAndGlyphs">1164.7 kWh</text>
<text x="764.70" y="641.90" style="font-size:14.60px;font-weight:700;fill:#0f172a" textLength="68.30" lengthAdjust="spacingAndGlyphs">809.1 kWh</text>
<text x="761.50" y="669.40" style="font-size:14.60px;font-weight:700;fill:#0f172a" textLength="71.50" lengthAdjust="spacingAndGlyphs">520.3 kWh</text>
<text x="932.90" y="296.40" style="font-size:11.00px;fill:#4e4e4e" textLength="65.60" lengthAdjust="spacingAndGlyphs">Energy (kWh)</text>
<text x="951.68" y="548.10" style="font-size:11.00px;fill:#4e4e4e" textLength="6.12" lengthAdjust="spacingAndGlyphs">0</text>
<text x="939.45" y="490.31" style="font-size:11.00px;fill:#4e4e4e" textLength="18.35" lengthAdjust="spacingAndGlyphs">100</text>
<text x="939.45" y="432.52" style="font-size:11.00px;fill:#4e4e4e" textLength="18.35" lengthAdjust="spacingAndGlyphs">200</text>
<text x="939.45" y="374.74" style="font-size:11.00px;fill:#4e4e4e" textLength="18.35" lengthAdjust="spacingAndGlyphs">300</text>
<text x="939.45" y="316.95" style="font-size:11.00px;fill:#4e4e4e" textLength="18.35" lengthAdjust="spacingAndGlyphs">400</text>
<text x="967.54" y="559.90" style="font-size:10.00px;fill:#4e4e4e" textLength="25.02" lengthAdjust="spacingAndGlyphs">00:00</text>
<text x="1056.01" y="559.90" style="font-size:10.00px;fill:#4e4e4e" textLength="25.02" lengthAdjust="spacingAndGlyphs">03:00</text>
<text x="1144.49" y="559.90" style="font-size:10.00px;fill:#4e4e4e" textLength="25.02" lengthAdjust="spacingAndGlyphs">06:00</text>
<text x="1232.96" y="559.90" style="font-size:10.00px;fill:#4e4e4e" textLength="25.02" lengthAdjust="spacingAndGlyphs">09:00</text>
<text x="1321.44" y="559.90" style="font-size:10.00px;fill:#4e4e4e" textLength="25.02" lengthAdjust="spacingAndGlyphs">12:00</text>
<text x="1409.91" y="559.90" style="font-size:10.00px;fill:#4e4e4e" textLength="25.02" lengthAdjust="spacingAndGlyphs">15:00</text>
<text x="1498.39" y="559.90" style="font-size:10.00px;fill:#4e4e4e" textLength="25.02" lengthAdjust="spacingAndGlyphs">18:00</text>
<text x="1586.86" y="559.90" style="font-size:10.00px;fill:#4e4e4e" textLength="25.02" lengthAdjust="spacingAndGlyphs">21:00</text>
<text x="919.20" y="630.20" style="font-size:14.60px;fill:#1e293b" textLength="150.11" lengthAdjust="spacingAndGlyphs" stroke="#1e293b" stroke-width="0.3">Total Energy Delivered:</text>
<text x="1578.90" y="631.60" style="font-size:18.80px;font-weight:700;fill:#4a1fe0" textLength="101.11" lengthAdjust="spacingAndGlyphs">2494.1 kWh</text>
<text x="53.00" y="775.90" style="font-size:18.80px;font-weight:700;fill:#120b48" textLength="251.59" lengthAdjust="spacingAndGlyphs">Charger Utilization Over Time</text>
<text x="53.00" y="802.40" style="font-size:14.60px;fill:#414b5f" textLength="313.60" lengthAdjust="spacingAndGlyphs" stroke="#414b5f" stroke-width="0.3">Optimized charging schedule utilization patterns</text>
<text x="1612.10" y="768.10" style="font-size:12.60px;fill:#414b5f" textLength="81.10" lengthAdjust="spacingAndGlyphs" stroke="#414b5f" stroke-width="0.3">Total Chargers</text>
<text x="1668.10" y="796.00" style="font-size:25.20px;font-weight:700;fill:#4a1fe0" textLength="24.61" lengthAdjust="spacingAndGlyphs">10</text>
<text x="68.33" y="1134.25" style="font-size:12.00px;fill:#000" textLength="6.67" lengthAdjust="spacingAndGlyphs">0</text>
<text x="68.33" y="1076.78" style="font-size:12.00px;fill:#000" textLength="6.67" lengthAdjust="spacingAndGlyphs">2</text>
<text x="68.33" y="1019.31" style="font-size:12.00px;fill:#000" textLength="6.67" lengthAdjust="spacingAndGlyphs">4</text>
<text x="68.33" y="961.84" style="font-size:12.00px;fill:#000" textLength="6.67" lengthAdjust="spacingAndGlyphs">6</text>
<text x="68.33" y="904.37" style="font-size:12.00px;fill:#000" textLength="6.67" lengthAdjust="spacingAndGlyphs">8</text>
<text x="61.66" y="846.90" style="font-size:12.00px;fill:#000" textLength="13.35" lengthAdjust="spacingAndGlyphs">10</text>
<text x="69.29" y="1146.90" style="font-size:11.00px;fill:#000" textLength="33.03" lengthAdjust="spacingAndGlyphs">Jan 01</text>
<text x="203.75" y="1146.90" style="font-size:11.00px;fill:#000" textLength="27.53" lengthAdjust="spacingAndGlyphs">06:00</text>
<text x="335.46" y="1146.90" style="font-size:11.00px;fill:#000" textLength="27.53" lengthAdjust="spacingAndGlyphs">12:00</text>
<text x="467.18" y="1146.90" style="font-size:11.00px;fill:#000" textLength="27.53" lengthAdjust="spacingAndGlyphs">18:00</text>
<text x="596.14" y="1146.90" style="font-size:11.00px;fill:#000" textLength="33.03" lengthAdjust="spacingAndGlyphs">Jan 02</text>
<text x="730.60" y="1146.90" style="font-size:11.00px;fill:#000" textLength="27.53" lengthAdjust="spacingAndGlyphs">06:00</text>
<text x="862.31" y="1146.90" style="font-size:11.00px;fill:#000" textLength="27.53" lengthAdjust="spacingAndGlyphs">12:00</text>
<text x="994.02" y="1146.90" style="font-size:11.00px;fill:#000" textLength="27.53" lengthAdjust="spacingAndGlyphs">18:00</text>
<text x="1122.99" y="1146.90" style="font-size:11.00px;fill:#000" textLength="33.03" lengthAdjust="spacingAndGlyphs">Jan 03</text>
<text x="1257.45" y="1146.90" style="font-size:11.00px;fill:#000" textLength="27.53" lengthAdjust="spacingAndGlyphs">06:00</text>
<text x="1389.16" y="1146.90" style="font-size:11.00px;fill:#000" textLength="27.53" lengthAdjust="spacingAndGlyphs">12:00</text>
<text x="1520.87" y="1146.90" style="font-size:11.00px;fill:#000" textLength="27.53" lengthAdjust="spacingAndGlyphs">18:00</text>
<text x="218.70" y="1215.50" style="font-size:12.60px;fill:#414b5f" textLength="65.70" lengthAdjust="spacingAndGlyphs" stroke="#414b5f" stroke-width="0.3">Peak Usage</text>
<text x="245.80" y="1244.10" style="font-size:21.00px;font-weight:700;fill:#4a1fe0" textLength="11.20" lengthAdjust="spacingAndGlyphs">9</text>
<text x="233.80" y="1262.80" style="font-size:12.60px;fill:#5b6474" textLength="35.01" lengthAdjust="spacingAndGlyphs" stroke="#5b6474" stroke-width="0.3">90.0%</text>
<text x="623.60" y="1215.50" style="font-size:12.60px;fill:#414b5f" textLength="84.40" lengthAdjust="spacingAndGlyphs" stroke="#414b5f" stroke-width="0.3">Average Usage</text>
<text x="650.80" y="1244.10" style="font-size:21.00px;font-weight:700;fill:#0b0f19" textLength="30.00" lengthAdjust="spacingAndGlyphs">5.4</text>
<text x="648.30" y="1262.80" style="font-size:12.60px;fill:#5b6474" textLength="34.81" lengthAdjust="spacingAndGlyphs" stroke="#5b6474" stroke-width="0.3">53.9%</text>
<text x="1037.50" y="1215.50" style="font-size:12.60px;fill:#414b5f" textLength="85.10" lengthAdjust="spacingAndGlyphs" stroke="#414b5f" stroke-width="0.3">Spare Capacity</text>
<text x="1075.80" y="1244.10" style="font-size:21.00px;font-weight:700;fill:#16a34a" textLength="7.60" lengthAdjust="spacingAndGlyphs">1</text>
<text x="1059.90" y="1262.80" style="font-size:12.60px;fill:#5b6474" textLength="40.38" lengthAdjust="spacingAndGlyphs" stroke="#5b6474" stroke-width="0.3">at peak</text>
<text x="1461.80" y="1215.50" style="font-size:12.60px;fill:#414b5f" textLength="65.41" lengthAdjust="spacingAndGlyphs" stroke="#414b5f" stroke-width="0.3">Load Factor</text>
<text x="1463.00" y="1244.10" style="font-size:21.00px;font-weight:700;fill:#0b0f19" textLength="61.81" lengthAdjust="spacingAndGlyphs">59.9%</text>
<text x="1467.20" y="1262.80" style="font-size:12.60px;fill:#5b6474" textLength="54.01" lengthAdjust="spacingAndGlyphs" stroke="#5b6474" stroke-width="0.3">efficiency</text>
</svg>
<div id="tip" class="abs"></div>
<svg width="1739" height="1326" viewBox="0 0 1739 1326" style="pointer-events:none">
<text x="1029.00" y="1060.70" style="font-size:14.00px;fill:#555" textLength="117.80" lengthAdjust="spacingAndGlyphs">Jan 02, 2025 17:30</text><text x="1029.00" y="1080.80" style="font-size:14.00px;fill:#555" textLength="34.40" lengthAdjust="spacingAndGlyphs">8 / 10</text>
</svg>
</body></html>
